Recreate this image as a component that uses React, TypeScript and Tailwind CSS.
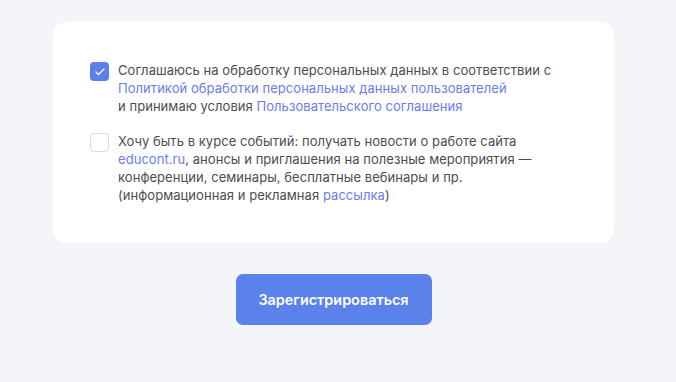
import { Check } from "lucide-react";

const font = { fontFamily: "Inter, 'Noto Sans', sans-serif" };

function Box({ checked }: { checked?: boolean }) {
  return checked ? (
    <span className="mt-[1px] flex h-[19px] w-[19px] shrink-0 items-center justify-center rounded-[4px] bg-[#5b80ea]">
      <Check className="h-[12px] w-[12px] text-white" strokeWidth={2.5} />
    </span>
  ) : (
    <span className="mt-[1px] h-[19px] w-[19px] shrink-0 rounded-[4px] border border-[#d9dbe0] bg-white" />
  );
}

const Link = ({ children }: { children: React.ReactNode }) => (
  <a className="text-[#6b7cf0]" href="#">{children}</a>
);

export default function App() {
  return (
    <div className="min-h-[382px] w-full bg-[#f4f5f9] pt-[22px]" style={font}>
      <div className="ml-[53px] w-[561px]">
        <div className="flex flex-col gap-[17px] rounded-[13px] bg-white pb-[39px] pl-[37px] pr-[30px] pt-[39px] text-[13px] leading-[18px] tracking-[0.05px] text-[#4b4d52]">
          <label className="flex gap-[9px]">
            <Box checked />
            <p>
              Соглашаюсь на обработку персональных данных в соответствии с{" "}
              <Link>Политикой обработки персональных данных пользователей</Link>
              <br />и принимаю условия <Link>Пользовательского соглашения</Link>
            </p>
          </label>
          <label className="flex gap-[9px]">
            <Box />
            <p>
              Хочу быть в курсе событий: получать новости о работе сайта
              <br />
              <Link>educont.ru</Link>, анонсы и приглашения на полезные мероприятия —
              <br />
              конференции, семинары, бесплатные вебинары и пр.
              <br />
              (информационная и рекламная <Link>рассылка</Link>)
            </p>
          </label>
        </div>
        <div className="mt-[31px] flex justify-center">
          <button className="h-[51px] w-[196px] rounded-[7px] bg-[#5a82ea] text-[14.4px] font-semibold text-white">
            Зарегистрироваться
          </button>
        </div>
      </div>
    </div>
  );
}
